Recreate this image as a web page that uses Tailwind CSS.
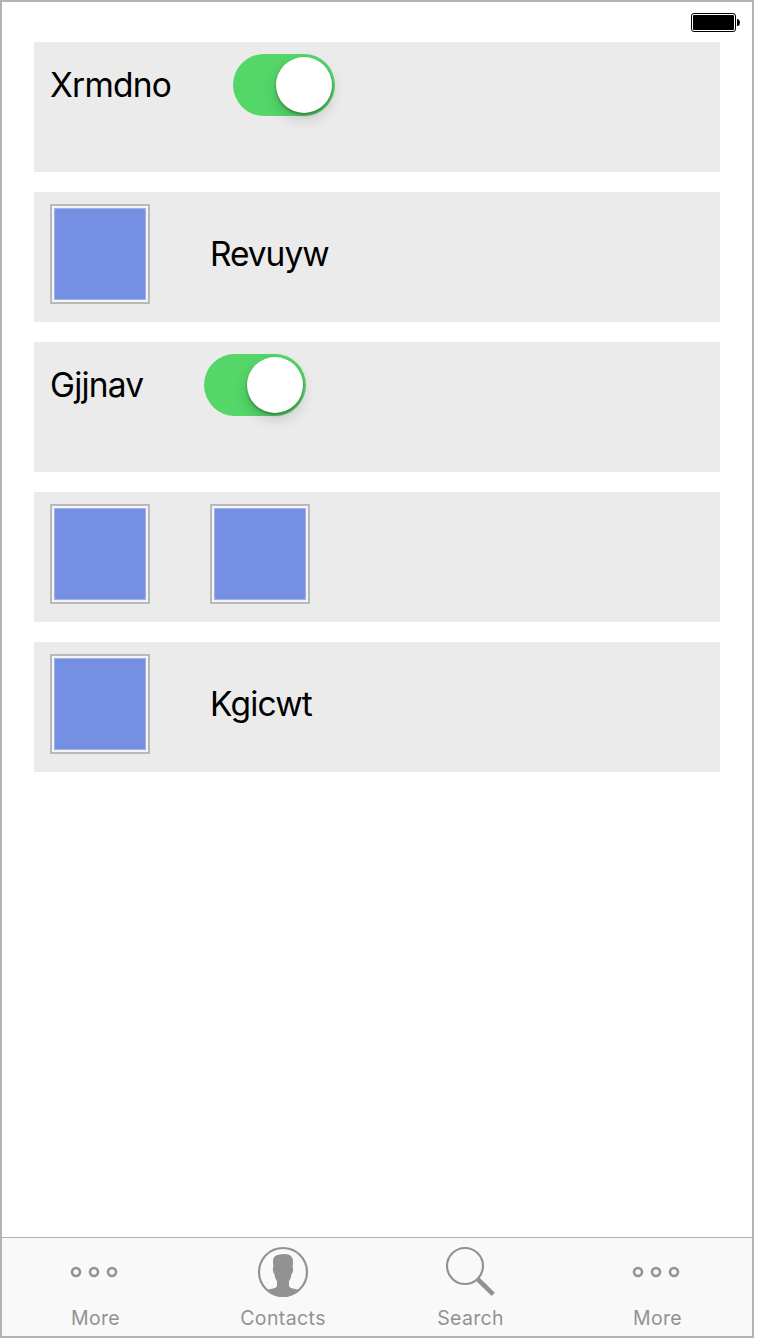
<!DOCTYPE html>
<html lang="en">
<head>
<meta charset="utf-8">
<title>Settings</title>
<script src="https://cdn.jsdelivr.net/npm/@tailwindcss/browser@4"></script>
</head>
<body class="bg-white font-['Inter',sans-serif] text-black">
<div class="flex h-[1338px] w-[754px] flex-col border-2 border-[#b3b3b3] bg-white">
  <header class="flex h-10 shrink-0 justify-end pt-[11px] pr-[12px]">
    <svg width="49" height="19" viewBox="0 0 49 19"><rect x=".5" y=".5" width="44" height="18" rx="2.5" fill="#fff" stroke="#000"/><rect x="2" y="2" width="41" height="15" rx="1" fill="#000"/><path d="M46 6h1q2 1 2 3.500t-2 3.500h-1z" fill="#000"/></svg>
  </header>
  <main class="flex grow flex-col gap-5 px-8">
    <section class="flex h-[130px] w-[686px] items-start bg-[#ebebeb] pt-3 pl-4">
      <span class="w-[183px] text-[33.5px] leading-[62px] tracking-[-0.8px]">Xrmdno</span>
      <div class="flex h-[62px] w-[102px] items-center justify-end rounded-full bg-[#54d669] pr-[3px]"><div class="size-14 rounded-full bg-white shadow-[0_6px_14px_rgba(0,0,0,0.16),0_2px_3px_rgba(0,0,0,0.3)]"></div></div>
    </section>
    <section class="flex h-[130px] w-[686px] items-start gap-[60px] bg-[#ebebeb] pt-3 pl-4">
      <div class="size-[100px] border-2 border-[#b9b9b9] bg-[#f3f4f8] p-[2px]"><div class="size-full border border-[#a3b3ea] bg-[#758fe2]"></div></div>
      <span class="text-[33.5px] leading-[100px] tracking-[-1.05px]">Revuyw</span>
    </section>
    <section class="flex h-[130px] w-[686px] items-start bg-[#ebebeb] pt-3 pl-4">
      <span class="w-[154px] text-[33.5px] leading-[62px] tracking-[-0.8px]">Gjjnav</span>
      <div class="flex h-[62px] w-[102px] items-center justify-end rounded-full bg-[#54d669] pr-[3px]"><div class="size-14 rounded-full bg-white shadow-[0_6px_14px_rgba(0,0,0,0.16),0_2px_3px_rgba(0,0,0,0.3)]"></div></div>
    </section>
    <section class="flex h-[130px] w-[686px] items-start gap-[60px] bg-[#ebebeb] pt-3 pl-4">
      <div class="size-[100px] border-2 border-[#b9b9b9] bg-[#f3f4f8] p-[2px]"><div class="size-full border border-[#a3b3ea] bg-[#758fe2]"></div></div>
      <div class="size-[100px] border-2 border-[#b9b9b9] bg-[#f3f4f8] p-[2px]"><div class="size-full border border-[#a3b3ea] bg-[#758fe2]"></div></div>
    </section>
    <section class="flex h-[130px] w-[686px] items-start gap-[60px] bg-[#ebebeb] pt-3 pl-4">
      <div class="size-[100px] border-2 border-[#b9b9b9] bg-[#f3f4f8] p-[2px]"><div class="size-full border border-[#a3b3ea] bg-[#758fe2]"></div></div>
      <span class="text-[33.5px] leading-[100px] tracking-[-0.8px]">Kgicwt</span>
    </section>
  </main>
  <nav class="grid h-[99px] shrink-0 grid-cols-[186px_190px_184px_190px] border-t border-[#b2b2b2] bg-[#f9f9f9] pt-2 text-[19.5px] text-[#929292]">
    <div class="flex flex-col items-center">
      <svg width="52" height="52" viewBox="0 0 52 52" fill="none" stroke="#929292" stroke-width="2.600"><circle cx="7" cy="26" r="4"/><circle cx="25" cy="26" r="4"/><circle cx="43" cy="26" r="4"/></svg>
      <span class="pt-[8px] pl-px leading-6 tracking-[0.3px]">More</span>
    </div>
    <div class="flex flex-col items-center">
      <svg width="52" height="52" viewBox="0 0 52 52"><circle cx="26" cy="26" r="24" fill="none" stroke="#929292" stroke-width="2.200"/><path d="M16 15.500Q16 11 19 9.500Q22 8 27 8Q32 8 34 10Q36 12 36 16L35.600 21Q36.600 22 35.700 26Q35.300 28 34.500 28Q34 33 32 35V39Q32 42 36 42.500Q40 43 42.500 44.600Q35 51 26 51T9.500 44.600Q12 43 16 42.500Q20 42 20 39V35Q18 33 17.500 28Q16.700 28 16.300 26Q15.300 22 16.400 21Z" fill="#929292"/></svg>
      <span class="pt-[8px] leading-6 tracking-[0.4px]">Contacts</span>
    </div>
    <div class="flex flex-col items-center">
      <svg width="52" height="52" viewBox="0 0 52 52" fill="none" stroke="#929292"><circle cx="21" cy="20" r="18" stroke-width="2.200"/><path d="M33.500 33 49.300 48.300" stroke-width="4.600"/></svg>
      <span class="pt-[8px] pl-px leading-6 tracking-[0.3px]">Search</span>
    </div>
    <div class="flex flex-col items-center">
      <svg width="52" height="52" viewBox="0 0 52 52" fill="none" stroke="#929292" stroke-width="2.600"><circle cx="7" cy="26" r="4"/><circle cx="25" cy="26" r="4"/><circle cx="43" cy="26" r="4"/></svg>
      <span class="pt-[8px] pl-px leading-6 tracking-[0.3px]">More</span>
    </div>
  </nav>
</div>
</body>
</html>
